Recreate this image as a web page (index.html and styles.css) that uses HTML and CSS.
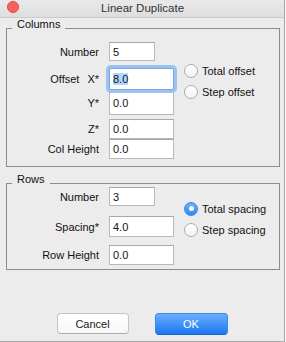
FILE: index.html
```html
<!DOCTYPE html>
<html lang="en">
<head>
  <meta charset="UTF-8" />
  <meta name="viewport" content="width=device-width, initial-scale=1.0" />
  <title>Linear Duplicate</title>
  <link rel="stylesheet" href="styles.css">
</head>
<body>

  <div class="window">
    <div class="titlebar">
      <span class="close"></span>
      <span class="title">Linear Duplicate</span>
    </div>

    <section class="group">
      <div class="group-head">
        <span class="line-short"></span>
        <span class="group-title">Columns</span>
        <span class="line-long"></span>
      </div>
      <div class="group-box cols-box">
        <div class="fields cols-fields">
          <div class="field h19">
            <span class="label">Number</span>
            <div class="input short">5</div>
          </div>
          <div class="field h22 mt7">
            <span class="label">Offset<span class="axis">X*</span></span>
            <div class="input focused"><span class="selected">8.0</span></div>
          </div>
          <div class="field h25">
            <span class="label">Y*</span>
            <div class="input">0.0</div>
          </div>
          <div class="field h20 mt4">
            <span class="label">Z*</span>
            <div class="input">0.0</div>
          </div>
          <div class="field h20">
            <span class="label">Col Height</span>
            <div class="input">0.0</div>
          </div>
        </div>
        <div class="radios cols-radios">
          <div class="radio"><span class="dot"></span>Total offset</div>
          <div class="radio"><span class="dot"></span>Step offset</div>
        </div>
      </div>
    </section>

    <section class="group rows-group">
      <div class="group-head">
        <span class="line-short"></span>
        <span class="group-title">Rows</span>
        <span class="line-long"></span>
      </div>
      <div class="group-box rows-box">
        <div class="fields rows-fields">
          <div class="field h19">
            <span class="label">Number</span>
            <div class="input short">3</div>
          </div>
          <div class="field h21 mt10">
            <span class="label">Spacing*</span>
            <div class="input">4.0</div>
          </div>
          <div class="field h20 mt8">
            <span class="label">Row Height</span>
            <div class="input">0.0</div>
          </div>
        </div>
        <div class="radios rows-radios">
          <div class="radio"><span class="dot checked"></span>Total spacing</div>
          <div class="radio"><span class="dot"></span>Step spacing</div>
        </div>
      </div>
    </section>

    <div class="buttons">
      <button class="btn">Cancel</button>
      <button class="btn btn-ok">OK</button>
    </div>
  </div>

</body>
</html>
```

FILE: styles.css
```css
body {
  margin: 0;
  background: #f4f4f4;
  font-family: "Liberation Sans", Arial, sans-serif;
  font-size: 11px;
  color: #111;
}
.window {
  width: 284px;
  height: 341px;
  background: #ececec;
  border-right: 1px solid #a9a9a9;
  border-bottom: 1px solid #a9a9a9;
}
.titlebar {
  height: 17px;
  border-bottom: 1px solid #cbcbcb;
  background: linear-gradient(#e9e9e9, #dedede);
  display: grid;
  grid-template-columns: 1fr auto 1fr;
}
.close {
  width: 10px;
  height: 10px;
  margin: 1px 0 0 7px;
  border-radius: 50%;
  background: #fc605b;
  border: 1px solid #e2463f;
}
.title {
  grid-column: 2;
  font-size: 11.5px;
  line-height: 17px;
  color: #333;
  padding-left: 1px;
}

/* titled groups */
.group {
  width: 274px;
  margin-left: 6px;
}
.rows-group {
  margin-top: 6px;
}
.group-head {
  height: 11px;
  display: flex;
  align-items: flex-end;
}
.line-short {
  width: 6px;
  border-bottom: 1px solid #8c8c8c;
}
.line-long {
  flex: 1;
  border-bottom: 1px solid #8c8c8c;
}
.group-title {
  line-height: 11px;
  padding: 0 5px;
  margin-bottom: -1px;
}
.group-box {
  display: flex;
  border: 1px solid #8c8c8c;
  border-top: none;
}
.cols-box {
  height: 137px;
}
.rows-box {
  height: 85px;
}

.fields {
  width: 167px;
}
.cols-fields {
  padding-top: 13px;
}
.rows-fields {
  padding-top: 3px;
}
.field {
  display: flex;
  align-items: center;
}
.label {
  width: 92px;
  margin-right: 10px;
  text-align: right;
}
.axis {
  margin-left: 8px;
}
.input {
  box-sizing: border-box;
  width: 65px;
  height: 100%;
  background: #fff;
  border: 1px solid #b9b9b9;
  border-top-color: #a8a8a8;
  padding-left: 3px;
  display: flex;
  align-items: center;
}
.input.short {
  width: 46px;
}
.input.focused {
  position: relative;
  z-index: 1;
  border-color: #7aa7e4;
  border-radius: 2px;
  box-shadow: 0 0 0 3px #9cc2f1;
}
.selected {
  background: #b4d5fe;
  line-height: 12px;
}
.h19 { height: 19px; }
.h20 { height: 20px; }
.h21 { height: 21px; }
.h22 { height: 22px; }
.h25 { height: 25px; }
.mt4 { margin-top: 4px; }
.mt7 { margin-top: 7px; }
.mt8 { margin-top: 8px; }
.mt10 { margin-top: 10px; }

/* radio buttons */
.radios {
  margin-left: 10px;
}
.cols-radios {
  padding-top: 31px;
}
.rows-radios {
  padding-top: 14px;
}
.radio {
  height: 21px;
  display: flex;
  align-items: center;
}
.dot {
  box-sizing: border-box;
  width: 14px;
  height: 14px;
  margin-right: 4px;
  border-radius: 50%;
  border: 1px solid #acacac;
  background: linear-gradient(#fff, #f3f3f3);
  display: flex;
  align-items: center;
  justify-content: center;
}
.dot.checked {
  border-color: #3b86e8;
  background: linear-gradient(#6cb2fa, #2b87f3);
}
.dot.checked::after {
  content: "";
  width: 5px;
  height: 5px;
  border-radius: 50%;
  background: #fff;
}

.buttons {
  display: flex;
  justify-content: center;
  gap: 26px;
  margin-top: 43px;
}
.btn {
  width: 72px;
  height: 21px;
  font-family: inherit;
  font-size: 11px;
  color: #222;
  background: linear-gradient(#fff, #f7f7f7);
  border: 1px solid #c6c6c6;
  border-bottom-color: #adadad;
  border-radius: 4px;
  padding: 0;
}
.btn-ok {
  width: 73px;
  height: 22px;
  color: #fff;
  background: linear-gradient(#69b0fb, #1a76f3);
  border-color: #3c86ec;
  border-bottom-color: #1f63d6;
}
```
